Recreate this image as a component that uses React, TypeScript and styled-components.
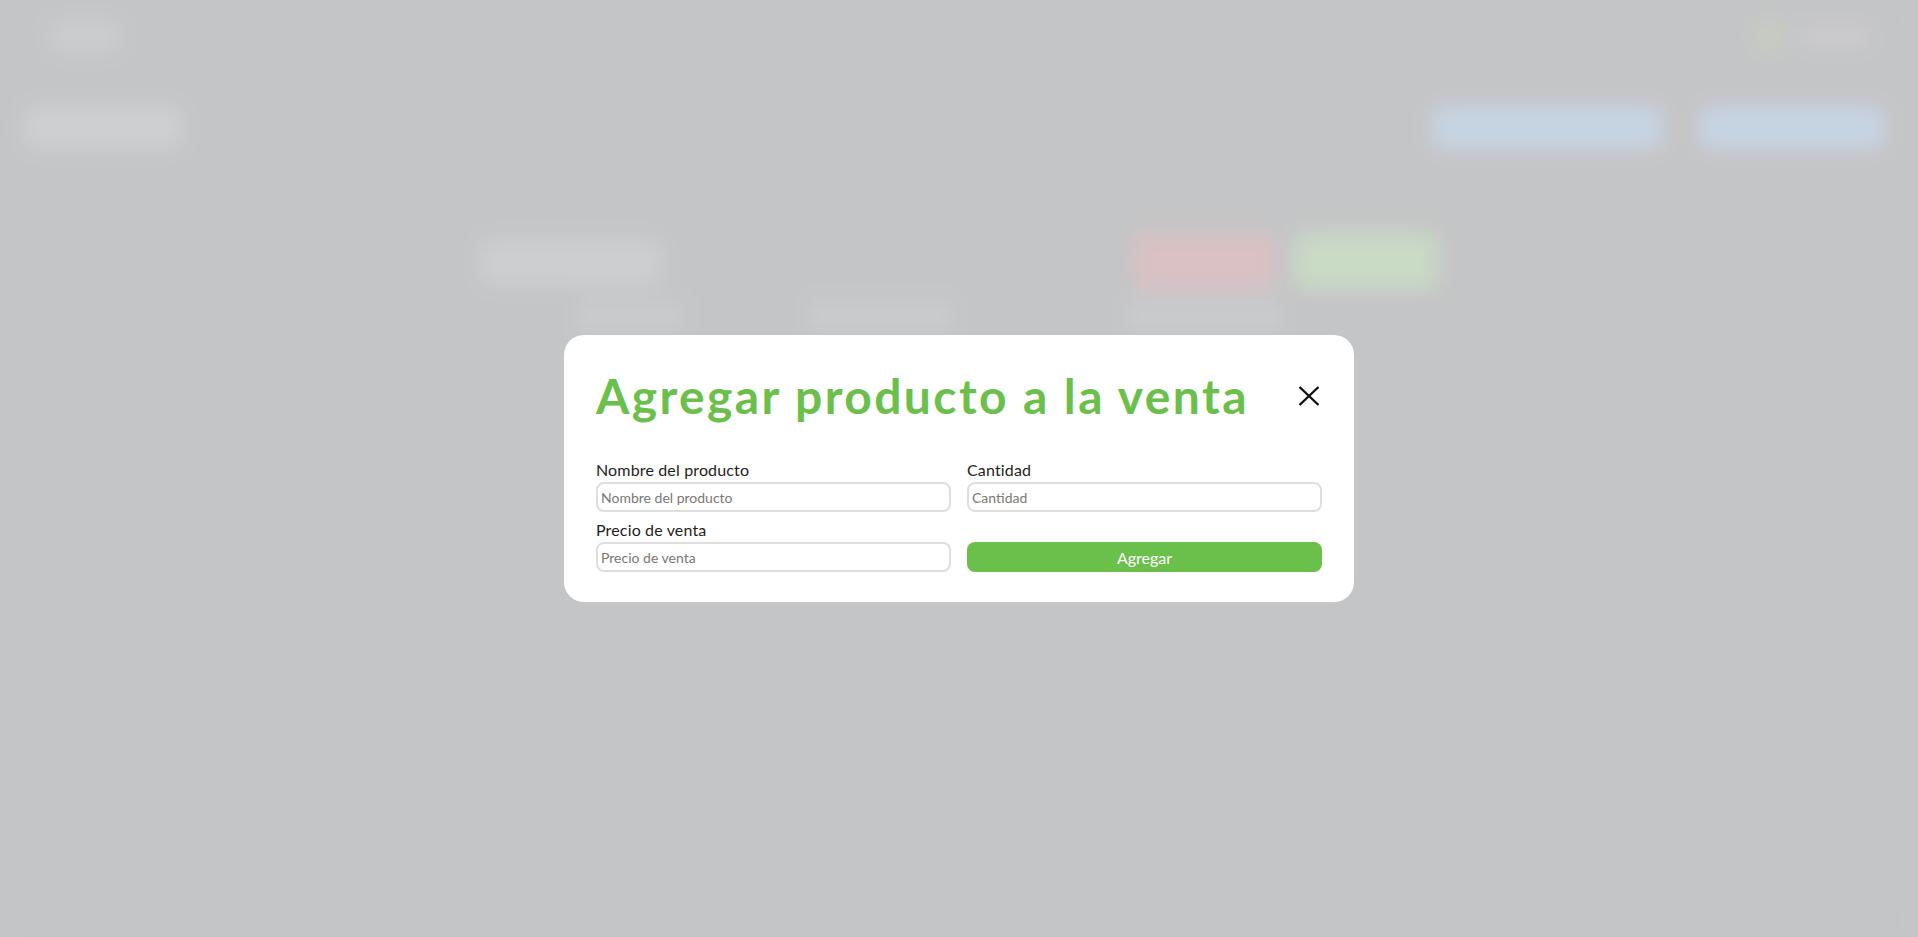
import React from "react";
import styled, { createGlobalStyle } from "styled-components";

const GlobalStyle = createGlobalStyle`
  html, body { margin: 0; padding: 0; }
  body {
    font-family: Lato, "Open Sans", Arial, sans-serif;
    background: #d3d4d6;
    overflow: hidden;
  }
  * { box-sizing: border-box; }
`;

/* ---------- blurred page behind the modal ---------- */

const Backdrop = styled.div`
  min-height: 100vh;
  background: #d3d4d6;
  filter: blur(10px);
`;

const TopBar = styled.header`
  display: flex;
  justify-content: space-between;
  align-items: center;
  padding: 18px 47px 0 49px;
  height: 55px;
`;

const Logo = styled.div`
  width: 73px;
  height: 37px;
  border-radius: 8px;
  background: #dbdcde;
`;

const UserChip = styled.div`
  display: flex;
  align-items: center;
  gap: 10px;
`;

const Avatar = styled.div`
  width: 40px;
  height: 37px;
  border-radius: 50%;
  background: #d6dccf;
`;

const UserName = styled.div`
  width: 72px;
  height: 22px;
  border-radius: 6px;
  background: #dcdcde;
`;

const Toolbar = styled.div`
  display: flex;
  justify-content: space-between;
  align-items: center;
  padding: 0 34px 0 24px;
  margin-top: 49px;
`;

const ToolGroup = styled.div`
  display: flex;
  gap: 37px;
`;

const GhostBlock = styled.div<{ $w: number; $h: number; $bg: string }>`
  width: ${(p) => p.$w}px;
  height: ${(p) => p.$h}px;
  border-radius: 10px;
  background: ${(p) => p.$bg};
`;

const Content = styled.section`
  width: 960px;
  margin: 82px auto 0;
  display: flex;
  flex-direction: column;
  gap: 6px;
`;

const ContentTop = styled.div`
  display: flex;
  justify-content: space-between;
  align-items: center;
`;

const Actions = styled.div`
  display: flex;
  gap: 18px;
  align-items: center;
`;

const HeadRow = styled.div`
  display: grid;
  grid-template-columns: 96px 110px 122px 147px 171px 159px;
  height: 40px;
`;

const HeadCell = styled.div<{ $on?: boolean }>`
  background: ${(p) => (p.$on ? "#d9dadc" : "transparent")};
`;

/* ---------- modal ---------- */

const Overlay = styled.div`
  position: fixed;
  inset: 0;
  background: rgba(0, 0, 0, 0.07);
  display: flex;
  align-items: center;
  justify-content: center;
`;

const Modal = styled.div`
  width: 790px;
  background: #ffffff;
  border-radius: 20px;
  padding: 32px 32px 30px;
`;

const ModalHeader = styled.div`
  display: flex;
  justify-content: space-between;
  align-items: center;
  margin-bottom: 36px;
`;

const Title = styled.h2`
  margin: 0;
  font-family: Lato, sans-serif;
  font-weight: 700;
  font-size: 48px;
  letter-spacing: 2.4px;
  line-height: normal;
  color: #6bc04b;
`;

const CloseButton = styled.button`
  width: 24px;
  height: 24px;
  padding: 0;
  border: 0;
  background: none;
  display: flex;
  align-items: center;
  justify-content: center;
  cursor: pointer;
`;

const Form = styled.form`
  display: grid;
  grid-template-columns: 1fr 1fr;
  column-gap: 16px;
  row-gap: 8px;
  align-items: end;
`;

const Field = styled.label`
  display: flex;
  flex-direction: column;
  gap: 3px;
`;

const LabelText = styled.span`
  font-family: Lato, sans-serif;
  font-size: 16px;
  letter-spacing: 0.15px;
  line-height: normal;
  color: #1f1d22;
`;

const Input = styled.input`
  height: 30px;
  width: 100%;
  border: 2px solid #dedede;
  border-radius: 8px;
  padding: 0 3px;
  font-family: Lato, sans-serif;
  font-size: 14px;
  color: #333;
  background: #fff;
  outline: none;
  &::placeholder {
    color: #7b7873;
  }
`;

const SubmitButton = styled.button`
  height: 30px;
  width: 100%;
  border: 0;
  border-radius: 8px;
  background: #6bc04b;
  color: #ffffff;
  font-family: Lato, sans-serif;
  font-size: 16px;
  cursor: pointer;
`;

const CloseIcon = () => (
  <svg width="24" height="24" viewBox="0 0 24 24" fill="none">
    <path d="M1.5 3L20.5 21M20.5 3L1.5 21" stroke="#111" strokeWidth="2.4" />
  </svg>
);

export default function App() {
  return (
    <>
      <GlobalStyle />
      <Backdrop aria-hidden>
        <TopBar>
          <Logo />
          <UserChip>
            <Avatar />
            <UserName />
          </UserChip>
        </TopBar>
        <Toolbar>
          <GhostBlock $w={159} $h={46} $bg="#dedfe1" />
          <ToolGroup>
            <GhostBlock $w={232} $h={43} $bg="#d6e5f5" />
            <GhostBlock $w={184} $h={43} $bg="#d6e5f5" />
          </ToolGroup>
        </Toolbar>
        <Content>
          <ContentTop>
            <GhostBlock $w={184} $h={49} $bg="#dddee0" />
            <Actions>
              <GhostBlock $w={143} $h={56} $bg="#ebd0d2" />
              <GhostBlock $w={145} $h={58} $bg="#d9ebd4" />
            </Actions>
          </ContentTop>
          <HeadRow>
            <HeadCell />
            <HeadCell $on />
            <HeadCell />
            <HeadCell $on />
            <HeadCell />
            <HeadCell $on />
          </HeadRow>
        </Content>
      </Backdrop>

      <Overlay>
        <Modal role="dialog" aria-modal="true">
          <ModalHeader>
            <Title>Agregar producto a la venta</Title>
            <CloseButton type="button" aria-label="Cerrar">
              <CloseIcon />
            </CloseButton>
          </ModalHeader>
          <Form onSubmit={(e) => e.preventDefault()}>
            <Field>
              <LabelText>Nombre del producto</LabelText>
              <Input placeholder="Nombre del producto" />
            </Field>
            <Field>
              <LabelText>Cantidad</LabelText>
              <Input placeholder="Cantidad" />
            </Field>
            <Field>
              <LabelText>Precio de venta</LabelText>
              <Input placeholder="Precio de venta" />
            </Field>
            <SubmitButton type="submit">Agregar</SubmitButton>
          </Form>
        </Modal>
      </Overlay>
    </>
  );
}
